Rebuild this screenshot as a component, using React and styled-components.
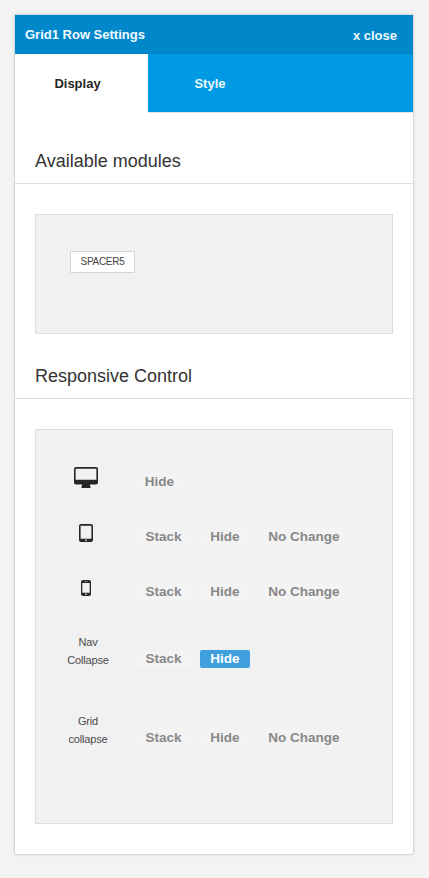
import React from 'react';
import styled, { createGlobalStyle } from 'styled-components';

const GlobalStyle = createGlobalStyle`
  * { box-sizing: border-box; }
  body {
    margin: 0;
    background: #f3f3f3;
    font-family: "Liberation Sans", Arial, sans-serif;
    color: #333;
  }
  button { font-family: inherit; border: 0; margin: 0; white-space: nowrap; }
`;

const Page = styled.div`
  height: 878px;
  padding: 14px 15px 0 14px;
`;

const Panel = styled.section`
  height: 841px;
  background: #fff;
  border: 1px solid #d7d7d7;
  border-radius: 1px 1px 3px 3px;
  box-shadow: 0 0 3px rgba(0, 0, 0, 0.08);
  overflow: hidden;
`;

const Header = styled.header`
  display: flex;
  justify-content: space-between;
  height: 39px;
  padding: 0 16px 0 10px;
  background: #0088ca;
  border-bottom: 1px solid #0080c0;
  color: #f2faff;
  font-size: 13px;
  font-weight: bold;
  line-height: 39px;
`;

const Title = styled.span`
  letter-spacing: 0;
`;

const Close = styled.button`
  padding: 2px 0 0;
  background: none;
  color: inherit;
  font-size: 13px;
  font-weight: bold;
  line-height: 38px;
  letter-spacing: 0;
`;

const Tabs = styled.nav`
  display: flex;
  height: 59px;
  background: #0099e3;
  border-bottom: 1px solid #e5e5e5;
`;

const Tab = styled.button`
  width: ${(p) => (p.$active ? 133 : 124)}px;
  height: 59px;
  padding: 0 ${(p) => (p.$active ? 8 : 0)}px 0 0;
  background: ${(p) => (p.$active ? '#fff' : 'transparent')};
  color: ${(p) => (p.$active ? '#262626' : '#eaf8ff')};
  font-size: 13px;
  font-weight: bold;
  line-height: 58px;
`;

const Heading = styled.h2`
  height: ${(p) => p.$height}px;
  margin: 0;
  padding: ${(p) => p.$top}px 0 0 20px;
  border-bottom: 1px solid #dedede;
  font-size: 18px;
  font-weight: normal;
  line-height: 22px;
`;

const Box = styled.div`
  height: ${(p) => p.$height}px;
  margin: 30px 20px 0;
  padding: ${(p) => p.$padding};
  background: #f1f1f1;
  border: 1px solid #dedede;
`;

const Chip = styled.div`
  width: 65px;
  height: 22px;
  background: #fff;
  border: 1px solid #d3d3d3;
  border-radius: 1px;
  color: #444;
  font-size: 10px;
  line-height: 20px;
  letter-spacing: -0.3px;
  text-align: center;
`;

const Row = styled.div`
  display: grid;
  grid-template-columns: 72px 1fr;
  column-gap: 13px;
  align-items: center;
  height: ${(p) => p.$height}px;
`;

const IconCell = styled.div`
  display: flex;
  justify-content: center;
  padding-bottom: 8px;
  svg { display: block; }
`;

const Label = styled.div`
  padding: 0 0 16px 4px;
  color: #4a4a4a;
  font-size: 11px;
  line-height: 18px;
  letter-spacing: -0.15px;
  text-align: center;
`;

const Options = styled.div`
  display: flex;
  gap: 8px;
`;

const Option = styled.button`
  width: ${(p) => p.$width}px;
  height: 18px;
  padding: 0;
  border-radius: 2px;
  background: ${(p) => (p.$active ? '#409fdd' : '#f3f3f3')};
  color: ${(p) => (p.$active ? '#fff' : '#888')};
  font-size: 13.5px;
  font-weight: bold;
  line-height: 18px;
`;

const Desktop = () => (
  <svg width="24" height="21" viewBox="0 0 24 21">
    <path fillRule="evenodd" fill="#262626" d="M2 0h20a2 2 0 0 1 2 2v13.5a2 2 0 0 1-2 2h-6v1.3l.5.7V21h-9v-1.5l.5-.7v-1.3H2a2 2 0 0 1-2-2V2a2 2 0 0 1 2-2zM1.6 1.7v11h20.8v-11z" />
  </svg>
);

const Tablet = () => (
  <svg width="14" height="18" viewBox="0 0 14 18">
    <path fillRule="evenodd" fill="#262626" d="M2 0h10a2 2 0 0 1 2 2v14a2 2 0 0 1-2 2H2a2 2 0 0 1-2-2V2a2 2 0 0 1 2-2zM1.6 1.7v13h10.8v-13zM6 15.8v1h2v-1z" />
  </svg>
);

const Phone = () => (
  <svg width="10" height="16" viewBox="0 0 10 16">
    <path fillRule="evenodd" fill="#262626" d="M2 0h6a2 2 0 0 1 2 2v12a2 2 0 0 1-2 2H2a2 2 0 0 1-2-2V2a2 2 0 0 1 2-2zM1.3 3v9.7h7.4V3zM3.5 1.4v.6h3v-.6zM4 13.7v1h2v-1z" />
  </svg>
);

const allOptions = [['Stack', 57], ['Hide', 50], ['No Change', 92]];
const rows = [
  { icon: <Desktop />, height: 55, options: [['Hide', 49]] },
  { icon: <Tablet />, height: 55, options: allOptions },
  { icon: <Phone />, height: 55, options: allOptions },
  { label: ['Nav', 'Collapse'], height: 80, options: allOptions.slice(0, 2), active: 'Hide' },
  { label: ['Grid', 'collapse'], height: 78, options: allOptions },
];

export default function App() {
  return (
    <Page>
      <GlobalStyle />
      <Panel>
        <Header>
          <Title>Grid1 Row Settings</Title>
          <Close>x close</Close>
        </Header>
        <Tabs>
          <Tab $active>Display</Tab>
          <Tab>Style</Tab>
        </Tabs>
        <Heading $height={71} $top={37}>Available modules</Heading>
        <Box $height={120} $padding="36px 34px">
          <Chip>SPACER5</Chip>
        </Box>
        <Heading $height={65} $top={31}>Responsive Control</Heading>
        <Box $height={395} $padding="24px 14px">
          {rows.map((row, i) => (
            <Row key={i} $height={row.height}>
              {row.icon ? (
                <IconCell>{row.icon}</IconCell>
              ) : (
                <Label>{row.label[0]}<br />{row.label[1]}</Label>
              )}
              <Options>
                {row.options.map(([name, width]) => (
                  <Option key={name} $width={width} $active={row.active === name}>{name}</Option>
                ))}
              </Options>
            </Row>
          ))}
        </Box>
      </Panel>
    </Page>
  );
}
